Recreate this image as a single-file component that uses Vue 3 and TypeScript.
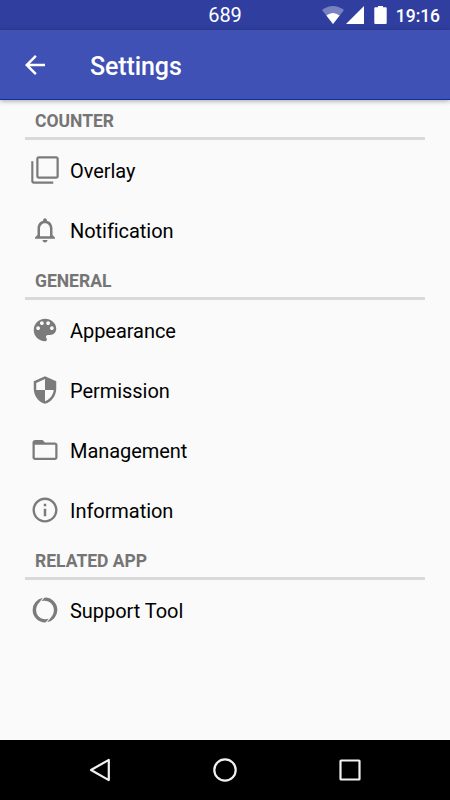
<script setup lang="ts">
interface Item {
  label: string
  path: string
}

interface Section {
  title: string
  items: Item[]
}

const sections: Section[] = [
  {
    title: 'COUNTER',
    items: [
      {
        label: 'Overlay',
        path: 'M2.7 5H1v16c0 1.1.9 2 2 2h15.6v-1.8H3.4Q2.7 21.2 2.7 20.6V5zM21 1H7c-1.1 0-2 .9-2 2v14c0 1.1.9 2 2 2h14c1.1 0 2-.9 2-2V3c0-1.1-.9-2-2-2zm.2 16.2H6.8V2.8h14.4v14.4z',
      },
      {
        label: 'Notification',
        path: 'M12 22c1.1 0 2-.9 2-2h-4c0 1.1.9 2 2 2zm6-6v-5c0-3.07-1.63-5.64-4.5-6.32V4c0-.83-.67-1.5-1.5-1.5s-1.5.67-1.5 1.5v.68C7.64 5.36 6 7.92 6 11v5l-2 2v1h16v-1l-2-2zm-2 1H8v-6c0-2.48 1.51-4.5 4-4.5s4 2.02 4 4.5v6z',
      },
    ],
  },
  {
    title: 'GENERAL',
    items: [
      {
        label: 'Appearance',
        path: 'M12 3c-4.97 0-9 4.03-9 9s4.03 9 9 9c.83 0 1.5-.67 1.5-1.5 0-.39-.15-.74-.39-1.01-.23-.26-.38-.61-.38-.99 0-.83.67-1.5 1.5-1.5H16c2.76 0 5-2.24 5-5 0-4.42-4.03-8-9-8zm-5.5 9c-.83 0-1.5-.67-1.5-1.5S5.67 9 6.5 9 8 9.67 8 10.5 7.33 12 6.5 12zm3-4C8.67 8 8 7.33 8 6.5S8.67 5 9.5 5s1.5.67 1.5 1.5S10.33 8 9.5 8zm5 0c-.83 0-1.5-.67-1.5-1.5S13.67 5 14.5 5s1.5.67 1.5 1.5S15.33 8 14.5 8zm3 4c-.83 0-1.5-.67-1.5-1.5S16.67 9 17.5 9s1.5.67 1.5 1.5-.67 1.5-1.5 1.5z',
      },
      {
        label: 'Permission',
        path: 'M12 1L3 5v6c0 5.55 3.84 10.74 9 12 5.16-1.26 9-6.45 9-12V5l-9-4zm0 10.99h7c-.53 4.12-3.28 7.79-7 8.94V12H5V6.3l7-3.11v8.8z',
      },
      {
        label: 'Management',
        path: 'M20 6h-8l-2-2H4c-1.1 0-1.99.9-1.99 2L2 18c0 1.1.9 2 2 2h16c1.1 0 2-.9 2-2V8c0-1.1-.9-2-2-2zm.2 12.2H3.8V7.8h16.4v10.4z',
      },
      {
        label: 'Information',
        path: 'M11 17h2v-6h-2v6zm1-15C6.48 2 2 6.48 2 12s4.48 10 10 10 10-4.48 10-10S17.52 2 12 2zm0 18.1c-4.47 0-8.1-3.63-8.1-8.1s3.63-8.1 8.1-8.1 8.1 3.63 8.1 8.1-3.63 8.1-8.1 8.1zM11 9h2V7h-2v2z',
      },
    ],
  },
  {
    title: 'RELATED APP',
    items: [
      {
        label: 'Support Tool',
        path: 'M10.3 2.2A10 10 0 0 0 2.1 12A10 10 0 0 0 12.4 21.9L15 19C9.5 20.6 4.9 17 4.9 12C4.9 9.8 5.6 8 6.8 6.7ZM13.7 21.8A10 10 0 0 0 21.9 12A10 10 0 0 0 11.6 2.1L9 5C14.5 3.4 19.1 7 19.1 12C19.1 14.2 18.4 16 17.2 17.3Z',
      },
    ],
  },
]
</script>

<template>
  <div class="screen">
    <header class="status">
      <span class="count">689</span>
      <div class="indicators">
        <svg class="wifi" width="22" height="18" viewBox="0 0 22 18">
          <path d="M11 18L0 4Q11 -4 22 4Z" fill="#fff" fill-opacity=".35" />
          <path d="M11 18L4.4 9.4Q11 4.4 17.6 9.4Z" fill="#fff" />
        </svg>
        <svg class="signal" width="18" height="18" viewBox="0 0 18 18">
          <path d="M18 0V18H0Z" fill="#fff" />
        </svg>
        <svg class="battery" width="13" height="18" viewBox="0 0 13 18">
          <path d="M4 0H9V1.2H11.7Q12.7 1.2 12.7 2.2V17Q12.7 18 11.7 18H1.3Q.3 18 .3 17V2.2Q.3 1.2 1.3 1.2H4Z" fill="#fff" />
        </svg>
        <span class="time">19:16</span>
      </div>
    </header>

    <div class="toolbar">
      <svg class="back" width="30" height="30" viewBox="0 0 24 24">
        <path d="M20 11H7.83l5.59-5.59L12 4l-8 8 8 8 1.41-1.41L7.83 13H20v-2z" fill="#fff" />
      </svg>
      <h1 class="title">Settings</h1>
    </div>

    <main class="content">
      <section v-for="section in sections" :key="section.title">
        <h2 class="heading">{{ section.title }}</h2>
        <div v-for="item in section.items" :key="item.label" class="row">
          <svg width="30" height="30" viewBox="0 0 24 24">
            <path :d="item.path" fill="#7b7b7b" />
          </svg>
          <span class="label">{{ item.label }}</span>
        </div>
      </section>
    </main>

    <nav class="navbar">
      <svg width="30" height="30" viewBox="0 0 30 30">
        <path d="M6 15L23.8 4.9V25.1Z" />
      </svg>
      <svg width="30" height="30" viewBox="0 0 30 30">
        <circle cx="15" cy="15" r="10.7" />
      </svg>
      <svg width="30" height="30" viewBox="0 0 30 30">
        <rect x="5.5" y="5.5" width="19" height="19" rx=".6" />
      </svg>
    </nav>
  </div>
</template>

<style>
body {
  margin: 0;
}
</style>

<style scoped>
.screen {
  display: flex;
  flex-direction: column;
  width: 450px;
  height: 800px;
  overflow: hidden;
  background: #fafafa;
  font-family: Roboto, "Liberation Sans", sans-serif;
}

svg {
  display: block;
  flex: none;
}

.status {
  display: grid;
  grid-template-columns: 1fr auto 1fr;
  grid-template-rows: 30px;
  align-items: center;
  height: 30px;
  flex: none;
  background: #303f9f;
  color: #fff;
}

.count {
  grid-column: 2;
  font-size: 20px;
  line-height: 30px;
  letter-spacing: -0.15px;
}

.indicators {
  display: flex;
  align-items: center;
  justify-content: flex-end;
  padding-right: 10px;
}

.signal {
  margin-left: 2px;
}

.battery {
  margin-left: 10px;
}

.time {
  margin-left: 8.5px;
  padding-top: 2px;
  font-size: 17.5px;
  font-weight: 500;
  line-height: 28px;
  letter-spacing: -0.05px;
}

.toolbar {
  display: flex;
  align-items: center;
  box-sizing: border-box;
  height: 70px;
  flex: none;
  padding-left: 20px;
  background: #3f51b5;
  border-bottom: 1px solid #0d30a4;
  box-shadow: 0 1px 5px rgba(0, 0, 0, 0.35);
}

.title {
  margin: 4px 0 0 40px;
  font-size: 25px;
  font-weight: 500;
  line-height: 30px;
  letter-spacing: -0.1px;
  color: #fff;
}

.content {
  flex: 1;
  padding: 0 25px;
}

.heading {
  box-sizing: border-box;
  height: 40px;
  margin: 0;
  padding-left: 10px;
  border-bottom: 3px solid #d9d9d9;
  font-size: 17.5px;
  font-weight: 700;
  line-height: 43px;
  color: #757575;
}

.row {
  display: flex;
  align-items: center;
  gap: 10px;
  height: 60px;
  padding-left: 5px;
  font-size: 20px;
  color: #000;
}

.label {
  padding-top: 2px;
  letter-spacing: -0.05px;
}

.navbar {
  display: flex;
  align-items: center;
  justify-content: space-between;
  height: 60px;
  flex: none;
  padding: 0 85px;
  background: #000;
}

.navbar path,
.navbar circle,
.navbar rect {
  fill: none;
  stroke: #f1f1f1;
  stroke-width: 2.2;
  stroke-linejoin: round;
}
</style>
